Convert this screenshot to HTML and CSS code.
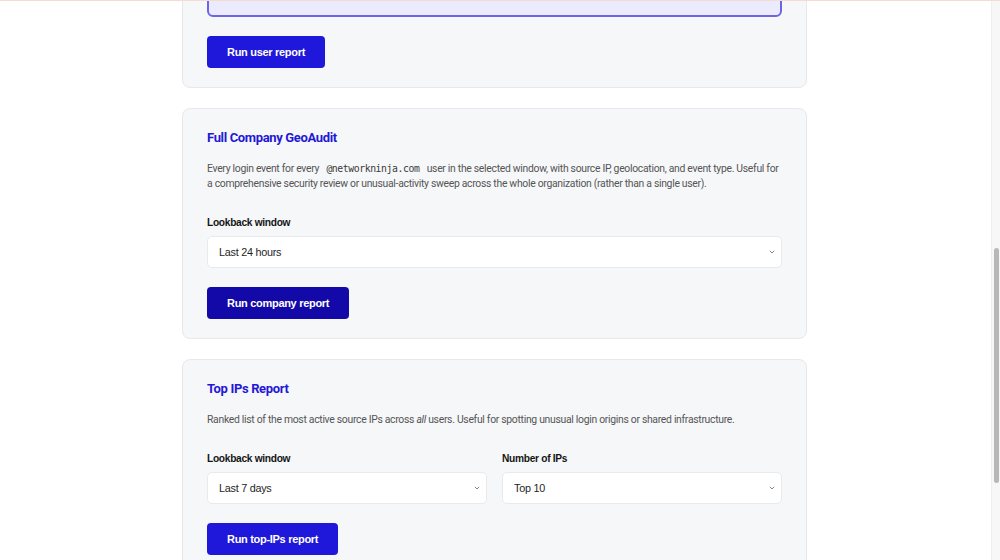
FILE: index.html
```html
<!DOCTYPE html>
<html lang="en">
<head>
    <meta charset="UTF-8">
    <meta name="viewport" content="width=device-width, initial-scale=1.0">
    <title>GeoAudit Reports</title>
    <link rel="stylesheet" href="styles.css">
</head>
<body>

    <div class="page">
        <div class="container">

            <div class="card">
                <textarea class="user-list" rows="4"></textarea>
                <button class="button">Run user report</button>
            </div>

            <div class="card">
                <h2>Full Company GeoAudit</h2>
                <p class="desc">Every login event for every <code>@networkninja.com</code> user in the selected window, with source IP, geolocation, and event type. Useful for a comprehensive security review or unusual-activity sweep across the whole organization (rather than a single user).</p>
                <div class="field">
                    <label for="company-window">Lookback window</label>
                    <select id="company-window">
                        <option>Last 24 hours</option>
                        <option>Last 7 days</option>
                        <option>Last 30 days</option>
                    </select>
                </div>
                <button class="button active">Run company report</button>
            </div>

            <div class="card">
                <h2>Top IPs Report</h2>
                <p class="desc">Ranked list of the most active source IPs across <em>all</em> users. Useful for spotting unusual login origins or shared infrastructure.</p>
                <div class="row">
                    <div class="field">
                        <label for="ips-window">Lookback window</label>
                        <select id="ips-window">
                            <option>Last 7 days</option>
                            <option>Last 24 hours</option>
                            <option>Last 30 days</option>
                        </select>
                    </div>
                    <div class="field">
                        <label for="ips-count">Number of IPs</label>
                        <select id="ips-count">
                            <option>Top 10</option>
                            <option>Top 25</option>
                            <option>Top 50</option>
                        </select>
                    </div>
                </div>
                <button class="button">Run top-IPs report</button>
            </div>

        </div>
    </div>

    <div class="scrollbar">
        <div class="thumb"></div>
    </div>

</body>
</html>
```

FILE: styles.css
```css
html, body {
    margin: 0;
    padding: 0;
    height: 100%;
}

body {
    display: flex;
    overflow: hidden;
    background-color: #ffffff;
    color: #333;
    font-family: 'Roboto', 'Liberation Sans', sans-serif;
    border-top: 1px solid #f4dcd2;
    box-sizing: border-box;
}

.page {
    flex: 1;
    overflow: hidden;
    padding-right: 2px;
}

.container {
    width: 625px;
    margin: -95px auto 0;
    display: flex;
    flex-direction: column;
    gap: 20px;
}

.card {
    background-color: #f6f7f9;
    border: 1px solid #e6e8ec;
    border-radius: 8px;
    padding: 20px 24px 19px;
    display: flex;
    flex-direction: column;
    align-items: flex-start;
}

.card h2 {
    margin: 0;
    font-size: 13px;
    line-height: 18px;
    font-weight: 700;
    letter-spacing: -0.35px;
    color: #2418d6;
}

.desc {
    margin: 14px 0 0;
    font-size: 10.4px;
    line-height: 15px;
    letter-spacing: -0.3px;
    color: #555;
}

.desc code {
    font-family: 'DejaVu Sans Mono', 'Liberation Mono', monospace;
    font-size: 9.8px;
    letter-spacing: -0.43px;
    color: #3a3a3a;
    padding: 0 5px;
}

.user-list {
    box-sizing: border-box;
    width: 100%;
    height: 90px;
    border: 2px solid #6d66e3;
    border-radius: 6px;
    background-color: #ecebfd;
    resize: none;
    margin: 0;
}

.field {
    display: flex;
    flex-direction: column;
    gap: 6px;
    width: 100%;
}

.card > .field,
.row {
    margin-top: 24px;
}

.row {
    display: flex;
    gap: 15px;
    width: 100%;
}

label {
    font-family: 'Liberation Sans', Arial, sans-serif;
    font-size: 10.2px;
    line-height: 15px;
    font-weight: 700;
    letter-spacing: -0.3px;
    color: #151515;
}

select {
    box-sizing: border-box;
    width: 100%;
    height: 32px;
    margin: 0;
    padding: 0 26px 0 11px;
    border: 1px solid #e9eaf0;
    border-radius: 5px;
    background-color: #fff;
    background-image: url("data:image/svg+xml,%3Csvg xmlns='http://www.w3.org/2000/svg' width='6' height='4' viewBox='0 0 6 4'%3E%3Cpath d='M0.8 0.8l2.2 2.2 2.2-2.2' fill='none' stroke='%23777' stroke-width='0.9'/%3E%3C/svg%3E");
    background-repeat: no-repeat;
    background-position: right 6px center;
    appearance: none;
    -webkit-appearance: none;
    font-family: 'Liberation Sans', Arial, sans-serif;
    font-size: 10.8px;
    letter-spacing: -0.25px;
    color: #1e1e1e;
}

.button {
    margin-top: 19px;
    height: 32px;
    padding: 0 20px;
    border: none;
    border-radius: 4px;
    background-color: #1f17d9;
    color: #fff;
    font-family: 'Liberation Sans', Arial, sans-serif;
    font-size: 11px;
    font-weight: 700;
    letter-spacing: -0.3px;
    cursor: pointer;
}

.button.active {
    background-color: #1309a8;
}

.scrollbar {
    width: 9px;
    height: 100%;
    background-color: #f7f7f7;
    border-left: 1px solid #efefef;
    box-sizing: border-box;
    padding: 247px 1px 0 2px;
}

.thumb {
    height: 235px;
    border-radius: 3px;
    background-color: #b8b8b8;
}
```
